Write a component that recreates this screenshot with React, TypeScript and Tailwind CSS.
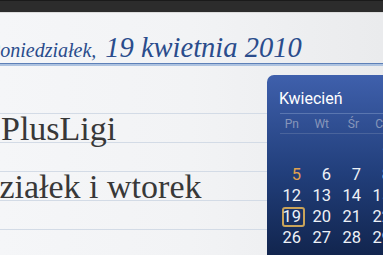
import React from "react";

const serif = { fontFamily: '"Liberation Serif", "Times New Roman", serif' };
const sans = { fontFamily: 'Roboto, "Liberation Sans", Arial, sans-serif' };

const weekdays = ["Pn", "Wt", "Śr", "Cz", "Pt", "So", "Nd"];
const rows: (number | null)[][] = [
  [null, null, null, 1, 2, 3, 4],
  [5, 6, 7, 8, 9, 10, 11],
  [12, 13, 14, 15, 16, 17, 18],
  [19, 20, 21, 22, 23, 24, 25],
  [26, 27, 28, 29, 30, null, null],
];

function Calendar() {
  return (
    <div
      className="absolute left-[267px] top-[75px] w-[220px] h-[200px] rounded-tl-[7px] rounded-tr-[7px] bg-gradient-to-b from-[#3f60ac] via-[#213e7a] to-[#0e1f44] overflow-hidden"
      style={sans}
    >
      <div className="pl-[12px] pt-[14px] text-[16px] leading-[20px] text-white">Kwiecień</div>
      <div className="ml-[13px] mt-[4px] h-[1px] bg-[#5a76b0]" />
      <div className="flex pl-[5px] mt-[3px]">
        {weekdays.map((d) => (
          <div key={d} className="w-[30px] text-right pr-[3px] text-[12px] leading-[14px] text-[#8796ba]">
            {d}
          </div>
        ))}
      </div>
      <div className="ml-[13px] mt-[2px] h-[1px] bg-[#4a649c]" />
      <div className="flex flex-col pl-[5px] mt-[9px]">
        {rows.map((r, i) => (
          <div key={i} className="flex h-[21px]">
            {r.map((n, j) => (
              <div key={j} className="w-[30px] flex justify-end">
                {n === 19 ? (
                  <div className="relative h-[21px] w-[28px] flex justify-end">
                    <div className="absolute left-[8px] top-[1px] w-[23px] h-[20px] rounded-[3px] border-2 border-[#c9a35a]" />
                    <span className="relative pr-[1px] text-[16.5px] leading-[21px] text-[#eef1f7]">19</span>
                  </div>
                ) : (
                  <span
                    className={
                      "pr-[1px] text-[16.5px] leading-[21px] " +
                      (n === 5 ? "text-[#e0a14e]" : "text-[#eef1f7]")
                    }
                  >
                    {n ?? ""}
                  </span>
                )}
              </div>
            ))}
          </div>
        ))}
      </div>
    </div>
  );
}

export default function App() {
  return (
    <div className="relative w-[383px] h-[255px] overflow-hidden bg-gradient-to-r from-[#f5f6f8] via-[#f2f3f5] to-[#eaebed]">
      <div className="h-[12px] bg-[#2c2c2c] border-t border-[#1a1a1a]" />
      <div className="h-[1px] bg-[#dcdcdc]" />
      <div className="h-[50px] pt-[21px] overflow-hidden whitespace-nowrap" style={serif}>
        <div className="flex items-baseline italic text-[#2a4c8c] leading-none ml-[-12px]">
          <span className="text-[20px]">Poniedziałek,</span>
          <span className="text-[28.5px] ml-[9px]">19 kwietnia 2010</span>
        </div>
      </div>
      <div className="h-[1px] bg-[#5d80b8]" />
      <div className="h-[2px] bg-[#aec3e0]" />
      <div className="h-[19px]" />
      <div className="flex flex-col whitespace-nowrap text-[34px] leading-[29px] text-[#383838]" style={serif}>
        <div className="h-[29px] border-b border-[#d3dbe6]" />
        <div className="h-[29px] border-b border-[#d3dbe6] pl-[1px]">PlusLigi</div>
        <div className="h-[29px] border-b border-[#d3dbe6]" />
        <div className="h-[29px] border-b border-[#d3dbe6]">
          <span className="inline-block ml-[-95px]">Poniedziałek i wtorek</span>
        </div>
        <div className="h-[29px] border-b border-[#d3dbe6]" />
      </div>
      <Calendar />
    </div>
  );
}
